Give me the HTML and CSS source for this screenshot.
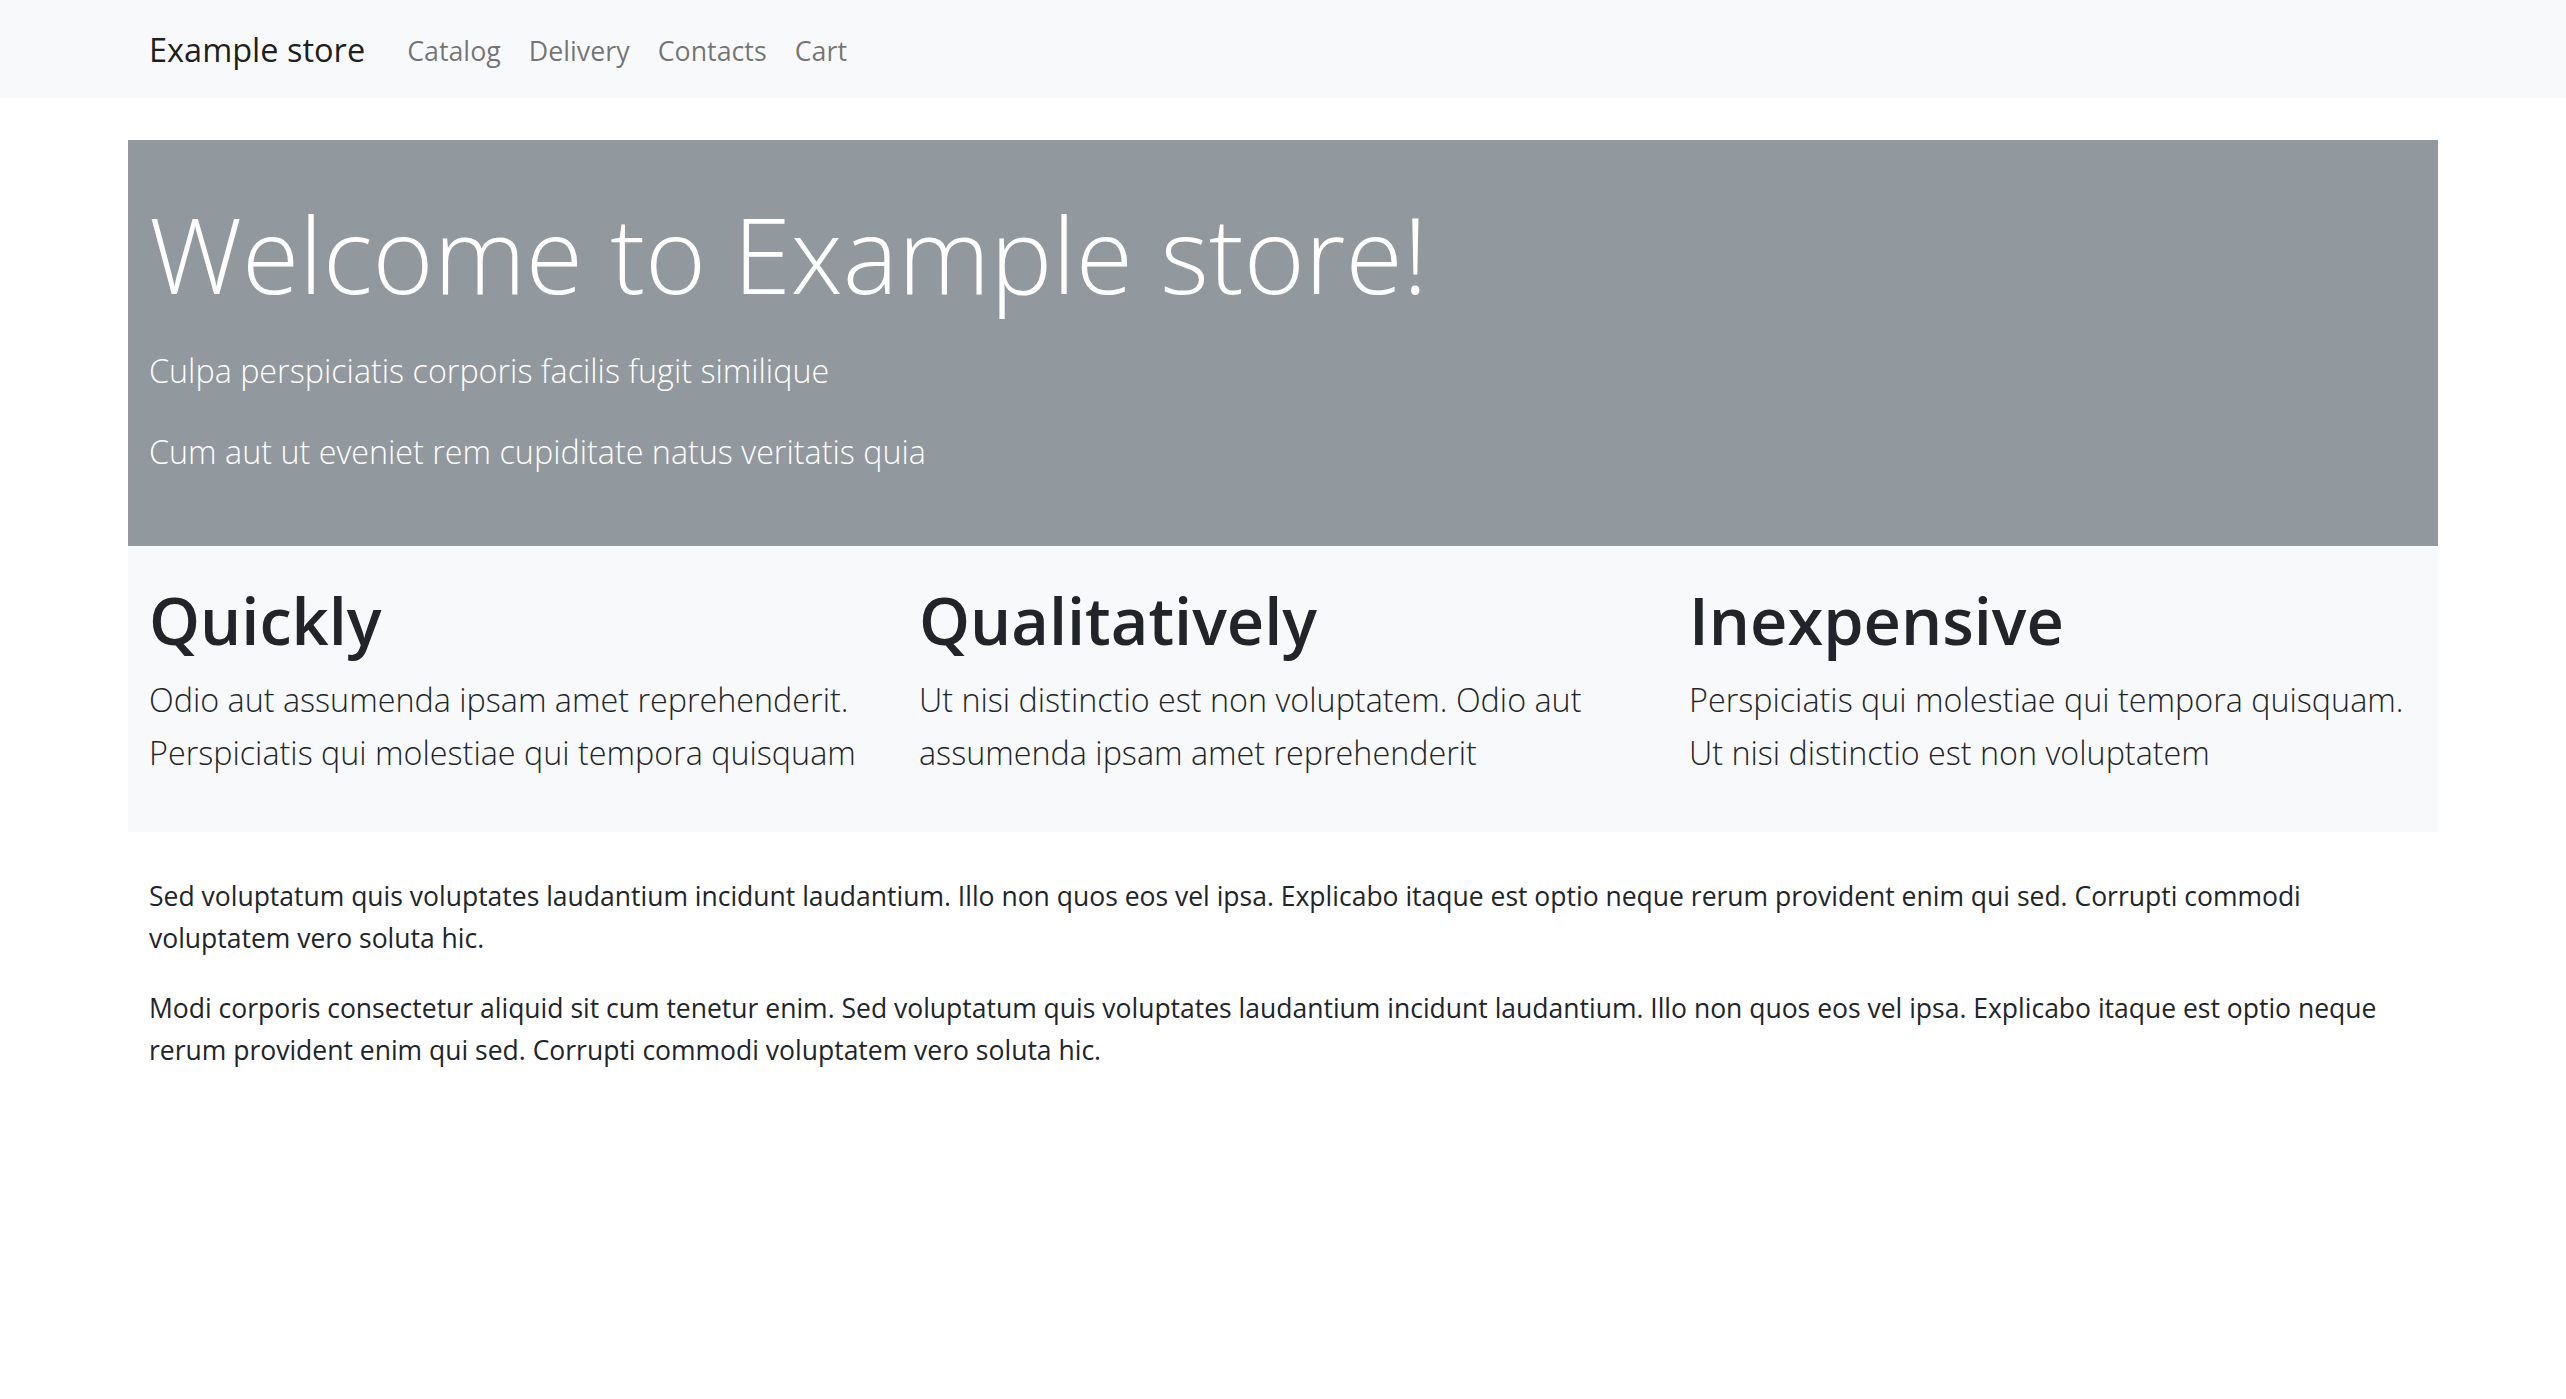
FILE: index.html
```html
<!DOCTYPE html>
<html lang="en">
<head>
<meta charset="utf-8">
<title>Example store</title>
<link rel="stylesheet" href="styles.css">
</head>
<body>
<nav class="navbar">
  <div class="container nav-inner">
    <a class="brand" href="#">Example store</a>
    <ul class="nav-links">
      <li><a href="#">Catalog</a></li>
      <li><a href="#">Delivery</a></li>
      <li><a href="#">Contacts</a></li>
      <li><a href="#">Cart</a></li>
    </ul>
  </div>
</nav>
<main class="container main">
  <section class="hero">
    <h1 class="hero-title">Welcome to Example store!</h1>
    <p class="lead">Culpa perspiciatis corporis facilis fugit similique</p>
    <p class="lead">Cum aut ut eveniet rem cupiditate natus veritatis quia</p>
  </section>
  <section class="features">
    <div class="feature">
      <h2 class="feature-title">Quickly</h2>
      <p class="lead">Odio aut assumenda ipsam amet reprehenderit. Perspiciatis qui molestiae qui tempora quisquam</p>
    </div>
    <div class="feature">
      <h2 class="feature-title">Qualitatively</h2>
      <p class="lead">Ut nisi distinctio est non voluptatem. Odio aut assumenda ipsam amet reprehenderit</p>
    </div>
    <div class="feature">
      <h2 class="feature-title">Inexpensive</h2>
      <p class="lead">Perspiciatis qui molestiae qui tempora quisquam. Ut nisi distinctio est non voluptatem</p>
    </div>
  </section>
  <div class="body-text">
    <p>Sed voluptatum quis voluptates laudantium incidunt laudantium. Illo non quos eos vel ipsa. Explicabo itaque est optio neque rerum provident enim qui sed. Corrupti commodi voluptatem vero soluta hic.</p>
    <p>Modi corporis consectetur aliquid sit cum tenetur enim. Sed voluptatum quis voluptates laudantium incidunt laudantium. Illo non quos eos vel ipsa. Explicabo itaque est optio neque rerum provident enim qui sed. Corrupti commodi voluptatem vero soluta hic.</p>
  </div>
</main>
</body>
</html>
```
FILE: styles.css
```css
html, body {
  margin: 0;
  padding: 0;
}
body {
  font-family: "Open Sans", "Noto Sans", sans-serif;
  font-size: 26.5px;
  line-height: 42px;
  color: #212529;
  background: #fff;
}
.container {
  width: 2310px;
  margin: 0 auto;
  box-sizing: border-box;
}
.navbar {
  background: #f8f9fa;
}
.nav-inner {
  display: flex;
  align-items: center;
  height: 98px;
  padding: 3px 21px 0;
}
.brand {
  font-size: 32.5px;
  line-height: 52.5px;
  color: rgba(0, 0, 0, 0.9);
  text-decoration: none;
  margin-right: 28px;
}
.nav-links {
  display: flex;
  list-style: none;
  margin: 0;
  padding: 0;
}
.nav-links a {
  display: block;
  padding: 0 14px;
  font-size: 26.8px;
  line-height: 42px;
  color: rgba(0, 0, 0, 0.55);
  text-decoration: none;
}
.main {
  margin-top: 42px;
}
.hero {
  background: #91989e;
  color: #fff;
  padding: 47px 21px 41px;
}
.hero-title {
  font-size: 104.3px;
  font-weight: 300;
  line-height: 134.4px;
  margin: 0 0 23px;
}
.lead {
  font-size: 32.3px;
  font-weight: 300;
  line-height: 52.5px;
  margin: 0 0 28px;
}
.features {
  display: grid;
  grid-template-columns: repeat(3, 1fr);
  background: #f8f9fa;
  padding: 32px 0 26px;
}
.feature {
  padding: 0 21px;
}
.feature-title {
  font-size: 64.9px;
  font-weight: 600;
  line-height: 84px;
  margin: 0 0 11px;
}
.body-text {
  padding: 43px 21px 0;
}
.body-text p {
  margin: 0 0 28px;
}
```
